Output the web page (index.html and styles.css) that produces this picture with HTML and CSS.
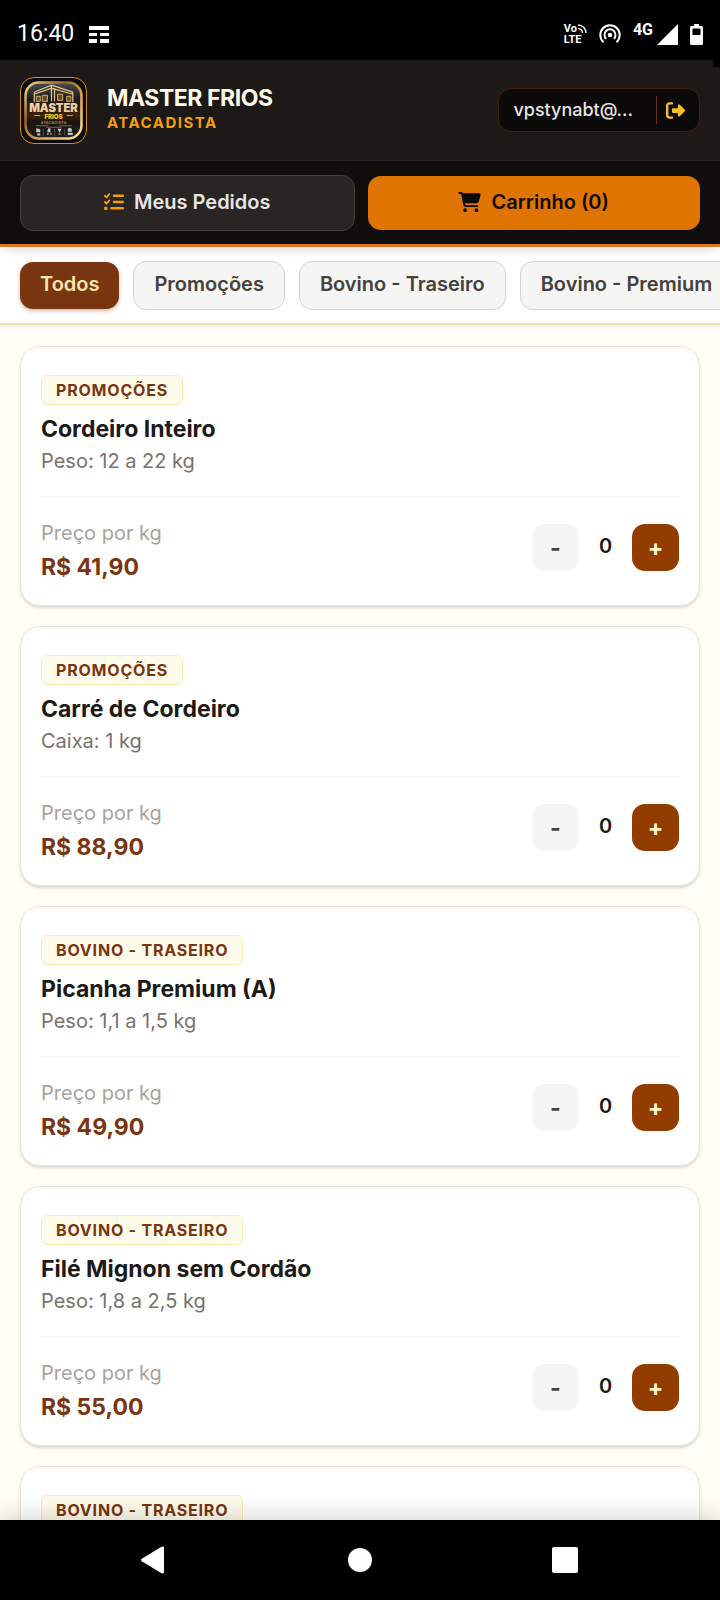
FILE: index.html
```html
<!DOCTYPE html>
<html lang="pt-BR">
<head>
<meta charset="utf-8">
<meta name="viewport" content="width=device-width, initial-scale=1">
<title>Master Frios Atacadista</title>
<link rel="stylesheet" href="styles.css">
</head>
<body>
<div class="status">
  <div class="status-group">
    <span class="clock">16:40</span>
    <svg class="i-note" viewBox="0 0 20 17" fill="#fff"><path d="M0 0h20v4H0zM0 7h8v3H0zM11 7h9v3h-9zM0 13h8v4H0zM11 13h9v4h-9z"/></svg>
  </div>
  <div class="status-group status-right">
    <div class="volte"><span class="vo">Vo<svg viewBox="0 0 9 9" fill="none" stroke="#fff" stroke-width="1.4"><path d="M0 1a8 8 0 0 1 8 8M0 4.500a4.500 4.500 0 0 1 4.500 4.500"/></svg></span><span>LTE</span></div>
    <svg class="i-hotspot" viewBox="0 0 22 20" fill="none" stroke="#fff" stroke-width="2"><path d="M4.500 18.200A9.700 9.700 0 1 1 17.500 18.200M7.200 14.800A5.500 5.500 0 1 1 14.800 14.800"/><circle cx="11" cy="11" r="2.300" fill="#fff" stroke="none"/></svg>
    <span class="net">4G</span>
    <svg class="i-signal" viewBox="0 0 21 21" fill="#fff"><path d="M21 0v21H0z"/></svg>
    <svg class="i-battery" viewBox="0 0 13 21"><path fill="#fff" d="M4 0h5v2h2.500Q13 2 13 3.500v16Q13 21 11.500 21h-10Q0 21 0 19.500v-16Q0 2 1.500 2H4z"/><path d="M2.500 4.500h8V11h-8z"/></svg>
  </div>
</div>

<header class="top">
  <div class="brand-row">
    <span class="corner"></span>
    <div class="logo">
      <svg viewBox="0 0 60 60">
        <defs>
          <linearGradient id="gold" x1="0" y1="0" x2="1" y2="1"><stop offset="0" stop-color="#f6d98a"/><stop offset=".35" stop-color="#9a6420"/><stop offset=".6" stop-color="#d9a648"/><stop offset="1" stop-color="#ffe39a"/></linearGradient>
          <linearGradient id="sky" x1="0" y1="0" x2="0" y2="1"><stop offset="0" stop-color="#4a4c50"/><stop offset=".3" stop-color="#1c1a18"/><stop offset=".6" stop-color="#3c2208"/><stop offset=".7" stop-color="#171411"/><stop offset="1" stop-color="#201f1f"/></linearGradient>
        </defs>
        <rect x="2.500" y="2.500" width="55" height="55" rx="13" fill="url(#sky)" stroke="url(#gold)" stroke-width="2.500"/>
        <path d="M11 12 28 5l21 7M11 12v10M49 12v10M28 5v16M31 8v13M11 14l17-6 21 6" fill="none" stroke="#e8c486" stroke-width="1.200"/>
        <path d="M13 16h4v5h-4zM19 15h5v6h-5zM34 14h5v6h-5zM43 16h4v5h-4z" fill="#6b451b" stroke="#f4d08a" stroke-width=".8"/>
        <text class="lg-master" x="30" y="31" text-anchor="middle">MASTER</text>
        <text class="lg-frios" x="30" y="38" text-anchor="middle">FRIOS</text>
        <path d="M11 35h6M43 35h6" stroke="#d99a30"/>
        <text class="lg-sub" x="30" y="43" text-anchor="middle">ATACADISTA</text>
        <path d="M13 45h12M36 45h12M23 46.500h15" stroke="#a8874c" stroke-width=".7"/>
        <path d="M20 48v7M31 48v7M41 48v7" stroke="#666" stroke-width=".6"/>
        <path d="M13 47.500l4 1v3h-4zM25 47.500h2v4h-3v-2zM34 48h4l-2 4zM44 48l2-1 2 1v3h-4zM14 52.500h3v2h-3zM24 52h1v2h-1zM27 52h1v2h-1zM35 52.500h2v1h-2zM44 52h5v2h-5z" fill="#c9c6c2"/>
      </svg>
    </div>
    <div class="brand">
      <h1>MASTER FRIOS</h1>
      <p>ATACADISTA</p>
    </div>
    <div class="user">
      <span class="email">vpstynabt@...</span>
      <button class="logout" aria-label="Sair"><svg viewBox="0 0 512 512" fill="currentColor"><path d="M377.9 105.9L500.7 228.700c7.200 7.200 11.300 17.100 11.300 27.300s-4.100 20.100-11.300 27.300L377.900 406.100c-6.400 6.400-15 9.900-24 9.900c-18.700 0-33.900-15.200-33.900-33.900l0-62.100-128 0c-17.700 0-32-14.300-32-32l0-64c0-17.700 14.300-32 32-32l128 0 0-62.100c0-18.700 15.200-33.900 33.900-33.900c9 0 17.600 3.600 24 9.900zM160 96L96 96c-17.700 0-32 14.300-32 32l0 256c0 17.700 14.300 32 32 32l64 0c17.700 0 32 14.300 32 32s-14.300 32-32 32l-64 0c-53 0-96-43-96-96L0 128C0 75 43 32 96 32l64 0c17.700 0 32 14.300 32 32s-14.300 32-32 32z"/></svg></button>
    </div>
  </div>
  <nav class="actions">
    <button class="btn btn-orders"><svg class="i-list" viewBox="0 0 512 512" fill="currentColor"><path d="M152.100 38.200c9.900 8.900 10.700 24 1.800 33.900l-72 80c-4.400 4.900-10.600 7.800-17.200 7.900s-12.900-2.400-17.600-7L7 113C-2.300 103.600-2.300 88.400 7 79s24.600-9.400 33.900 0l22.100 22.100 55.100-61.200c8.900-9.900 24-10.700 33.900-1.800zm0 160c9.900 8.900 10.700 24 1.800 33.900l-72 80c-4.400 4.900-10.600 7.800-17.200 7.900s-12.900-2.400-17.600-7L7 273c-9.400-9.400-9.400-24.600 0-33.900s24.600-9.400 33.900 0l22.100 22.100 55.100-61.200c8.900-9.900 24-10.700 33.900-1.800zM224 96c0-17.700 14.300-32 32-32l224 0c17.700 0 32 14.300 32 32s-14.300 32-32 32l-224 0c-17.700 0-32-14.300-32-32zm0 160c0-17.700 14.300-32 32-32l224 0c17.700 0 32 14.300 32 32s-14.300 32-32 32l-224 0c-17.700 0-32-14.300-32-32zM160 416c0-17.700 14.300-32 32-32l288 0c17.700 0 32 14.300 32 32s-14.300 32-32 32l-288 0c-17.700 0-32-14.300-32-32zM48 368a48 48 0 1 1 0 96 48 48 0 1 1 0-96z"/></svg>Meus Pedidos</button>
    <button class="btn btn-cart"><svg class="i-cart" viewBox="0 0 576 512" fill="currentColor"><path d="M0 24C0 10.700 10.700 0 24 0L69.500 0c22 0 41.500 12.800 50.600 32l411 0c26.300 0 45.500 25 38.600 50.400l-41 152.300c-8.500 31.400-37 53.300-69.500 53.300l-288.500 0 5.400 28.500c2.200 11.300 12.100 19.500 23.600 19.500L488 336c13.300 0 24 10.700 24 24s-10.700 24-24 24l-288.300 0c-34.600 0-64.300-24.600-70.700-58.500L77.400 54.500c-.7-3.800-4-6.500-7.900-6.500L24 48C10.700 48 0 37.300 0 24zM128 464a48 48 0 1 1 96 0 48 48 0 1 1 -96 0zm336-48a48 48 0 1 1 0 96 48 48 0 1 1 0-96z"/></svg>Carrinho (0)</button>
  </nav>
</header>

<div class="filters">
  <button class="chip chip-on">Todos</button>
  <button class="chip">Promoções</button>
  <button class="chip">Bovino - Traseiro</button>
  <button class="chip">Bovino - Premium</button>
</div>

<main class="list">
  <article class="card">
    <div class="info"><span class="tag">PROMOÇÕES</span><h2>Cordeiro Inteiro</h2><p>Peso: 12 a 22 kg</p></div>
    <div class="buy"><div class="price"><span>Preço por kg</span><strong>R$ 41,90</strong></div>
      <div class="qty"><button class="minus">-</button><output>0</output><button class="plus">+</button></div></div>
  </article>
  <article class="card">
    <div class="info"><span class="tag">PROMOÇÕES</span><h2>Carré de Cordeiro</h2><p>Caixa: 1 kg</p></div>
    <div class="buy"><div class="price"><span>Preço por kg</span><strong>R$ 88,90</strong></div>
      <div class="qty"><button class="minus">-</button><output>0</output><button class="plus">+</button></div></div>
  </article>
  <article class="card">
    <div class="info"><span class="tag">BOVINO - TRASEIRO</span><h2>Picanha Premium (A)</h2><p>Peso: 1,1 a 1,5 kg</p></div>
    <div class="buy"><div class="price"><span>Preço por kg</span><strong>R$ 49,90</strong></div>
      <div class="qty"><button class="minus">-</button><output>0</output><button class="plus">+</button></div></div>
  </article>
  <article class="card">
    <div class="info"><span class="tag">BOVINO - TRASEIRO</span><h2>Filé Mignon sem Cordão</h2><p>Peso: 1,8 a 2,5 kg</p></div>
    <div class="buy"><div class="price"><span>Preço por kg</span><strong>R$ 55,00</strong></div>
      <div class="qty"><button class="minus">-</button><output>0</output><button class="plus">+</button></div></div>
  </article>
  <article class="card">
    <div class="info"><span class="tag">BOVINO - TRASEIRO</span></div>
  </article>
</main>

<nav class="sysnav">
  <button aria-label="Voltar"><svg viewBox="0 0 28 28" fill="#fff"><path d="M.8 12.800Q-.6 14 .8 15.200L20.500 27.200Q23 28 23 26V2Q23 0 20.500.8z"/></svg></button>
  <button aria-label="Início"><svg viewBox="0 0 28 28" fill="#fff"><circle cx="14" cy="14" r="12"/></svg></button>
  <button aria-label="Recentes"><svg viewBox="0 0 28 28" fill="#fff"><rect x="1" y="1" width="26" height="26" rx="2"/></svg></button>
</nav>
</body>
</html>
```

FILE: styles.css
```css
* { box-sizing: border-box; }
body {
  margin: 0;
  height: 100vh;
  display: flex;
  flex-direction: column;
  overflow: hidden;
  background: #fffdf5;
  font-family: Inter, "Liberation Sans", sans-serif;
  font-size: 20px;
  line-height: 28px;
}
h1, h2, p { margin: 0; }
button { font: inherit; border: 0; padding: 0; margin: 0; cursor: pointer; }
svg { display: block; flex: none; }

.status {
  flex: none;
  display: flex;
  justify-content: space-between;
  align-items: center;
  padding: 20px 17px 12px 17px;
  background: #000;
  color: #fff;
  font-family: Roboto, sans-serif;
}
.status-group { display: flex; align-items: center; gap: 15px; }
.clock { font-size: 23px; line-height: 28px; }
.i-note { width: 20px; height: 17px; }
.status-right { gap: 12px; }
.volte { display: flex; flex-direction: column; font-size: 11px; line-height: 11px; font-weight: 700; }
.vo { display: flex; align-items: center; gap: 1px; }
.vo svg { width: 9px; height: 9px; }
.i-hotspot { width: 22px; height: 20px; }
.net { margin-bottom: 8px; font-size: 16px; line-height: 18px; font-weight: 700; }
.i-signal { width: 21px; height: 21px; margin-left: -8px; }
.i-battery { width: 13px; height: 21px; }

.top {
  flex: none;
  position: relative;
  z-index: 2;
  background: #100e0d;
  border-bottom: 3px solid #d9781a;
  box-shadow: 0 7px 10px -5px rgba(0, 0, 0, .16);
}
.brand-row {
  position: relative;
  display: flex;
  align-items: center;
  padding: 17px 20px 16px;
  background: #1c1917;
  border-bottom: 1px solid #292524;
}
.corner { position: absolute; top: 0; right: 0; width: 7px; height: 7px; background: #000; }
.logo {
  width: 67px;
  height: 67px;
  padding: 2px;
  border: 1px solid #d98a14;
  border-radius: 14px;
  background: #0a0a0a;
}
.logo svg { width: 100%; height: 100%; }
.lg-master { font: 900 11px Inter, sans-serif; fill: #f0d0a0; }
.lg-frios { font: 900 6px Inter, sans-serif; fill: #f5c228; }
.lg-sub { font: 700 4px Inter, sans-serif; fill: #b5742c; }
.brand { flex: 1; margin-left: 20px; padding-bottom: 2px; }
.brand h1 { font-size: 23px; line-height: 26px; font-weight: 700; letter-spacing: -.02em; color: #fffbeb; }
.brand p { font-size: 15px; line-height: 24px; font-weight: 700; letter-spacing: .1em; color: #f59e0b; }
.user {
  display: flex;
  align-items: center;
  height: 44px;
  margin-bottom: 1px;
  padding: 0 14px;
  border: 1px solid #451f0c;
  border-radius: 13px;
  background: #0c0a09;
}
.email { padding-right: 23px; font-size: 18px; font-weight: 500; color: #e7e5e4; }
.logout {
  height: 28px;
  padding-left: 9px;
  border-left: 1px solid #6b2f0c;
  background: none;
  color: #fbbf24;
}
.logout svg { width: 19px; height: 19px; }

.actions { display: flex; align-items: center; gap: 13px; padding: 14px 20px 13px; }
.btn {
  flex: 1 1 0;
  display: flex;
  align-items: center;
  justify-content: center;
  gap: 10px;
  height: 54px;
  padding-bottom: 2px;
  border-radius: 13px;
  font-weight: 600;
}
.btn-orders { height: 56px; background: #292524; border: 1px solid #44403c; color: #e7e5e4; }
.btn-cart { background: #e07400; color: #0c0a09; }
.i-list { width: 20px; height: 20px; color: #f59e0b; }
.i-cart { width: 23px; height: 20px; }

.filters {
  flex: none;
  position: relative;
  z-index: 1;
  display: flex;
  align-items: center;
  gap: 14px;
  padding: 14px 20px 13px;
  overflow: hidden;
  background: #fff;
  border-bottom: 2px solid #f3e6a8;
  box-shadow: 0 1px 3px rgba(0, 0, 0, .1);
}
.chip {
  flex: none;
  height: 49px;
  padding: 0 20px 3px;
  border: 1px solid #d6d3d1;
  border-radius: 13px;
  background: #f5f5f4;
  color: #44403c;
  font-weight: 600;
}
.chip-on {
  height: 47px;
  border: 0;
  background: #78350f;
  color: #fde8b0;
  box-shadow: 0 2px 4px rgba(120, 53, 15, .35);
}

.list {
  flex: 1 1 0;
  min-height: 0;
  overflow: hidden;
  display: flex;
  flex-direction: column;
  gap: 20px;
  padding: 21px 20px;
}
.card {
  flex: none;
  padding: 28px 20px 20px;
  border: 1px solid #e7e5e4;
  border-radius: 20px;
  background: #fff;
  box-shadow: 0 2px 3px rgba(0, 0, 0, .14);
}
.tag {
  display: inline-block;
  padding: 0 14px;
  border: 1px solid #fbecb0;
  border-radius: 6px;
  background: #fffbeb;
  color: #78350f;
  font-size: 16px;
  line-height: 28px;
  font-weight: 700;
  letter-spacing: .05em;
  vertical-align: top;
}
.card h2 { margin-top: 8px; font-size: 23px; line-height: 32px; font-weight: 700; color: #1c1917; }
.info p { line-height: 32px; color: #78716c; }
.buy {
  display: flex;
  align-items: center;
  justify-content: space-between;
  margin-top: 19px;
  padding-top: 20px;
  border-top: 1px solid #f5f5f4;
}
.price { display: flex; flex-direction: column; }
.price span { line-height: 32px; color: #a8a29e; }
.price strong { font-size: 23px; line-height: 36px; font-weight: 700; color: #78350f; }
.qty { display: flex; align-items: flex-start; margin-bottom: 7px; }
.qty button { width: 47px; height: 47px; border-radius: 13px; font-size: 23px; font-weight: 700; }
.minus { background: #f5f5f4; color: #44403c; }
.plus { background: #923c00; color: #fef3c7; }
.qty output { width: 53px; line-height: 44px; text-align: center; font-weight: 600; color: #1c1917; }

.sysnav {
  flex: none;
  position: relative;
  z-index: 2;
  display: flex;
  justify-content: center;
  gap: 177px;
  padding: 26px 0;
  background: #000;
  box-shadow: 0 -4px 22px rgba(0, 0, 0, .16);
}
.sysnav button { background: none; }
.sysnav svg { width: 28px; height: 28px; }
```
